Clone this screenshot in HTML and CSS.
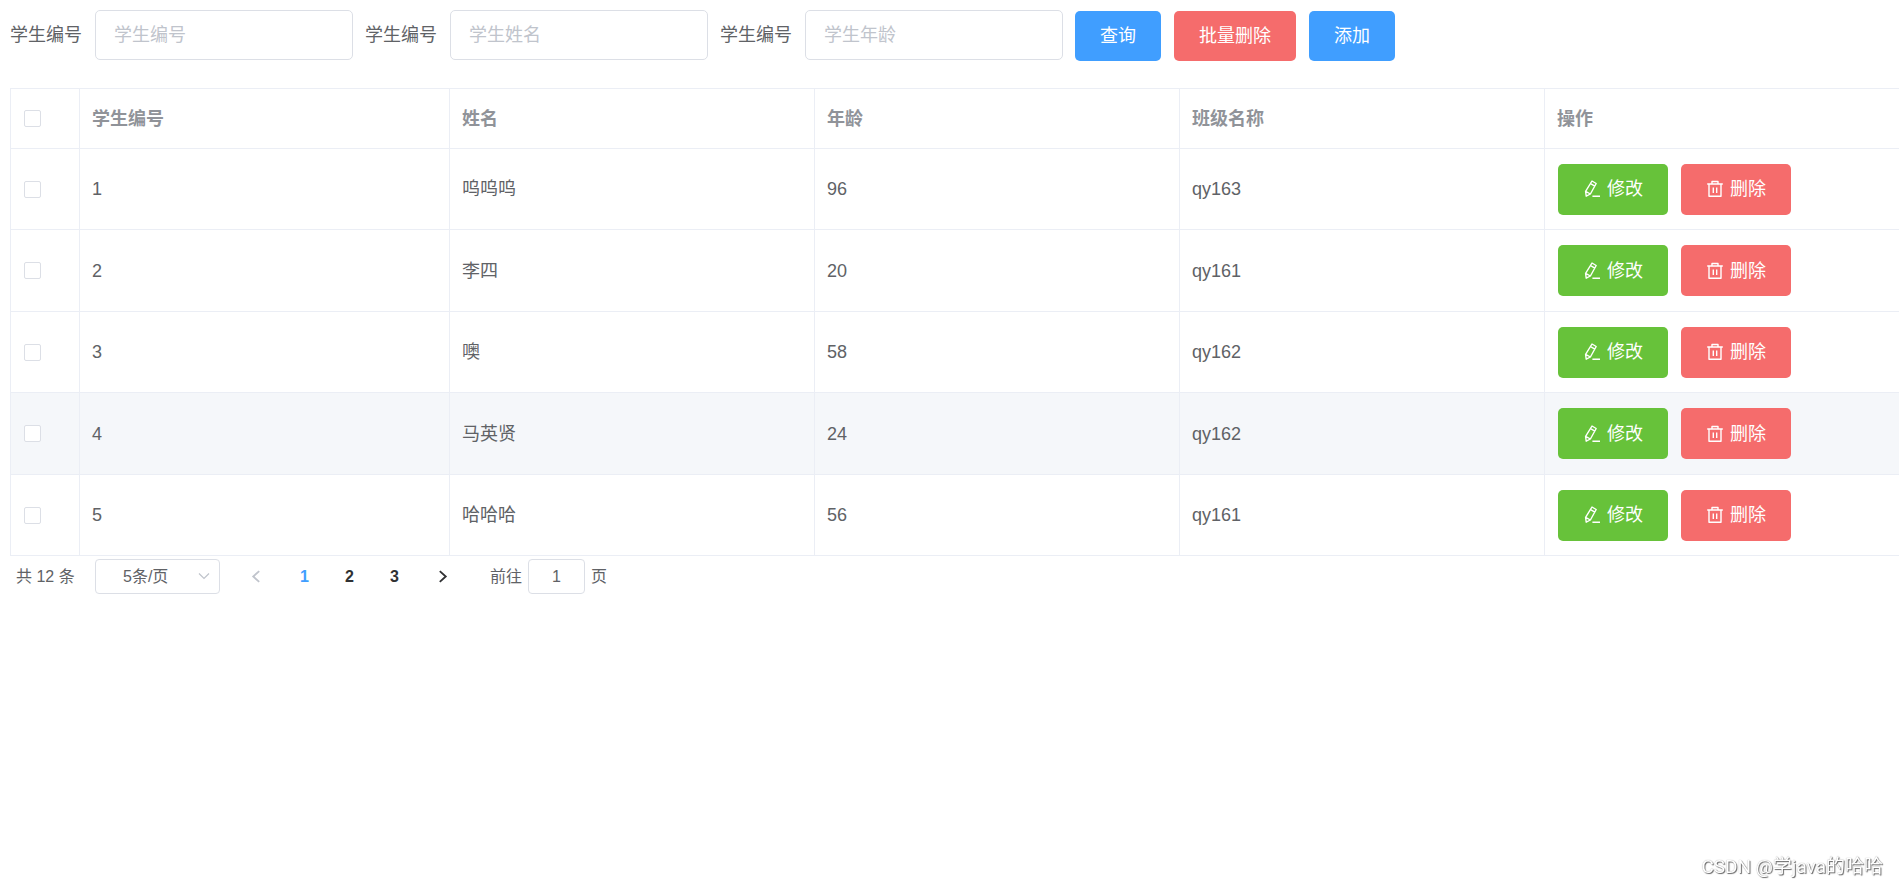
FILE: index.html
```
<!DOCTYPE html>
<html lang="zh-CN">
<head>
<meta charset="utf-8">
<title>学生管理</title>
<link rel="stylesheet" href="styles.css">
</head>
<body>
<svg class="sprite" aria-hidden="true">
  <symbol id="edit" viewBox="0 0 18 18"><path d="M9 1 13.200 3.500 7.400 14 3.200 16.200 2.600 11.400zM7.600 3.700l4.200 2.400M2.600 11.400l4.800 2.600M9.400 16.200H17"/></symbol>
  <symbol id="trash" viewBox="0 0 18 18"><path d="M1.200 4h15.600M6 4V1.500h6V4M3 4v12.200h12V4M7.300 7.400v5.600M10.700 7.400v5.600"/></symbol>
</svg>
<form class="toolbar">
  <div class="field"><label for="sid">学生编号</label><input id="sid" type="text" placeholder="学生编号"></div>
  <div class="field"><label for="sname">学生编号</label><input id="sname" type="text" placeholder="学生姓名"></div>
  <div class="field"><label for="sage">学生编号</label><input id="sage" type="text" placeholder="学生年龄"></div>
  <div class="actions">
    <button type="button" class="btn primary">查询</button>
    <button type="button" class="btn danger">批量删除</button>
    <button type="button" class="btn primary">添加</button>
  </div>
</form>
<div class="table-wrap">
<table class="grid">
  <colgroup><col class="col-check"><col class="col-id"><col><col><col><col></colgroup>
  <thead>
    <tr><th><input type="checkbox" class="check" aria-label="全选"></th><th>学生编号</th><th>姓名</th><th>年龄</th><th>班级名称</th><th>操作</th></tr>
  </thead>
  <tbody>
    <tr><td><input type="checkbox" class="check" aria-label="选择 1"></td><td>1</td><td>呜呜呜</td><td>96</td><td>qy163</td>
      <td><div class="ops"><button type="button" class="btn success"><svg class="icon"><use href="#edit"/></svg>修改</button><button type="button" class="btn danger"><svg class="icon"><use href="#trash"/></svg>删除</button></div></td></tr>
    <tr><td><input type="checkbox" class="check" aria-label="选择 2"></td><td>2</td><td>李四</td><td>20</td><td>qy161</td>
      <td><div class="ops"><button type="button" class="btn success"><svg class="icon"><use href="#edit"/></svg>修改</button><button type="button" class="btn danger"><svg class="icon"><use href="#trash"/></svg>删除</button></div></td></tr>
    <tr><td><input type="checkbox" class="check" aria-label="选择 3"></td><td>3</td><td>噢</td><td>58</td><td>qy162</td>
      <td><div class="ops"><button type="button" class="btn success"><svg class="icon"><use href="#edit"/></svg>修改</button><button type="button" class="btn danger"><svg class="icon"><use href="#trash"/></svg>删除</button></div></td></tr>
    <tr class="hover"><td><input type="checkbox" class="check" aria-label="选择 4"></td><td>4</td><td>马英贤</td><td>24</td><td>qy162</td>
      <td><div class="ops"><button type="button" class="btn success"><svg class="icon"><use href="#edit"/></svg>修改</button><button type="button" class="btn danger"><svg class="icon"><use href="#trash"/></svg>删除</button></div></td></tr>
    <tr><td><input type="checkbox" class="check" aria-label="选择 5"></td><td>5</td><td>哈哈哈</td><td>56</td><td>qy161</td>
      <td><div class="ops"><button type="button" class="btn success"><svg class="icon"><use href="#edit"/></svg>修改</button><button type="button" class="btn danger"><svg class="icon"><use href="#trash"/></svg>删除</button></div></td></tr>
  </tbody>
</table>
</div>
<nav class="pagination" aria-label="分页">
  <span class="total">共 12 条</span>
  <span class="size">
    <select aria-label="每页条数"><option>5条/页</option></select>
    <svg class="caret" viewBox="0 0 12 12"><path d="M1 3.500 6 8.500 11 3.500"/></svg>
  </span>
  <button type="button" class="step" disabled aria-label="上一页"><svg viewBox="0 0 12 12"><path d="M8.500 1 3 6l5.500 5"/></svg></button>
  <span class="pages"><button type="button" class="page active">1</button><button type="button" class="page">2</button><button type="button" class="page">3</button></span>
  <button type="button" class="step" aria-label="下一页"><svg viewBox="0 0 12 12"><path d="M3.500 1 9 6l-5.500 5"/></svg></button>
  <label class="jump">前往<input type="text" value="1">页</label>
</nav>
<div class="watermark">CSDN @学java的哈哈</div>
</body>
</html>
```
FILE: styles.css
```
* { box-sizing: border-box; }
body {
  margin: 0;
  padding: 10px 0 0 10px;
  background: #fff;
  color: #606266;
  font: 18px/24px "Liberation Sans", "Noto Sans CJK SC", sans-serif;
  overflow-x: hidden;
}
button, input, select { font: inherit; color: inherit; margin: 0; }
.sprite { display: none; }

.toolbar { display: flex; align-items: flex-start; gap: 12px; margin-bottom: 27px; }
.field { display: flex; align-items: center; gap: 13px; }
.field input {
  width: 258px;
  height: 50px;
  padding: 0 18px;
  border: 1px solid #dcdfe6;
  border-radius: 5px;
  background: #fff;
}
.field input::placeholder { color: #c0c4cc; opacity: 1; }
.actions { display: flex; gap: 13px; padding-top: 1px; }

.btn {
  display: inline-flex;
  align-items: center;
  justify-content: center;
  gap: 6px;
  height: 50px;
  padding: 0 25px;
  border: 0;
  border-radius: 5px;
  color: #fff;
  white-space: nowrap;
}
.primary { background: #409eff; }
.danger { background: #f56c6c; }
.success { background: #67c23a; }
.icon { width: 18px; height: 18px; fill: none; stroke: #fff; stroke-width: 1.4; stroke-linejoin: round; }

.table-wrap { overflow: hidden; }
.grid {
  width: calc(100% + 11px);
  table-layout: fixed;
  border-spacing: 0;
  border: solid #ebeef5;
  border-width: 1px 0 0 1px;
}
.col-check { width: 69px; }
.col-id { width: 370px; }
.grid th, .grid td {
  padding: 0 12px;
  border: solid #ebeef5;
  border-width: 0 1px 1px 0;
  text-align: left;
  vertical-align: middle;
}
.grid th:first-child, .grid td:first-child,
.grid td:last-child { padding-left: 13px; }
.grid th { height: 60px; color: #909399; font-weight: bold; }
.grid td { height: 81px; }
.grid tr:nth-child(even) td { height: 82px; }
.hover td { background: #f5f7fa; }
.ops { display: flex; gap: 13px; }
.ops .btn { height: 51px; }
.check {
  display: block;
  appearance: none;
  width: 17px;
  height: 17px;
  border: 1px solid #dcdfe6;
  border-radius: 2px;
  background: #fff;
}

.pagination {
  display: flex;
  align-items: center;
  padding: 3px 6px;
  font-size: 16px;
}
.total { min-width: 60px; margin-right: 19px; }
.size { position: relative; margin-right: 14px; }
.size select {
  display: block;
  appearance: none;
  width: 125px;
  height: 35px;
  padding: 0 27px;
  border: 1px solid #dcdfe6;
  border-radius: 4px;
  background: #fff;
}
.caret {
  position: absolute;
  right: 10px;
  top: 11px;
  width: 12px;
  height: 12px;
  fill: none;
  stroke: #c0c4cc;
  stroke-width: 1.2;
  pointer-events: none;
}
.step, .page { height: 35px; padding: 0; border: 0; background: none; color: #303133; }
.step { display: flex; align-items: center; justify-content: center; width: 44px; }
.step svg { width: 13px; height: 13px; fill: none; stroke: currentColor; stroke-width: 1.7; }
.step:disabled { color: #c0c4cc; }
.pages { display: flex; margin: 0 3px 0 4px; }
.page { width: 45px; font-weight: bold; }
.page.active { color: #409eff; }
.jump { display: flex; align-items: center; gap: 6px; margin-left: 26px; }
.jump input {
  width: 57px;
  height: 35px;
  border: 1px solid #dcdfe6;
  border-radius: 4px;
  text-align: center;
}

.watermark {
  position: fixed;
  right: 16px;
  bottom: 8px;
  color: #fff;
  font: 19px/24px Roboto, "Noto Sans CJK SC", sans-serif;
  text-shadow: 1px 1px 1px #666, 0 0 1px #999;
}
```
